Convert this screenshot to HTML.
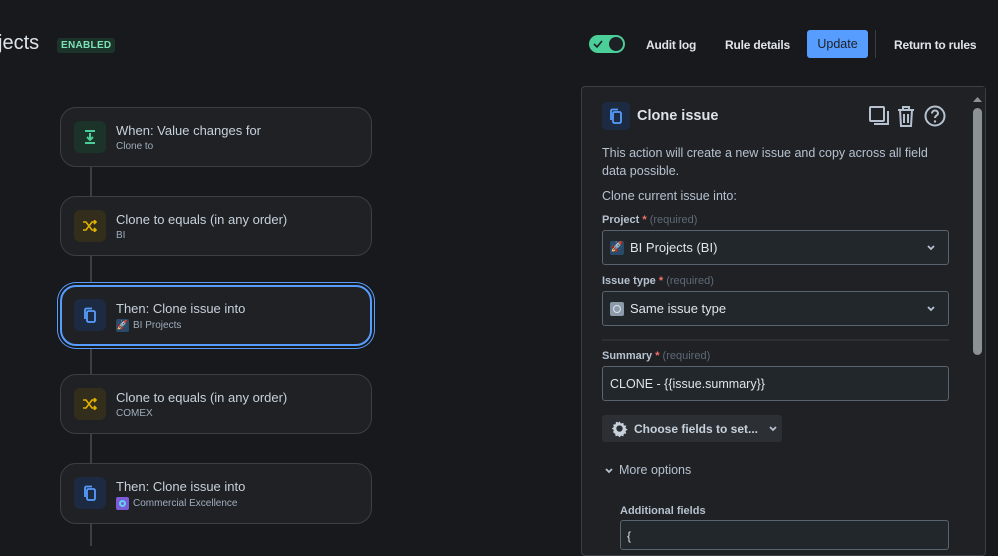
<!DOCTYPE html>
<html><head><style>
*{box-sizing:border-box;margin:0;padding:0}
body{width:998px;height:542px;overflow:hidden;background:#17191c;font-family:"Liberation Sans",sans-serif;color:#c7d1db;position:relative}
.abs{position:absolute}
.title{left:-2px;top:32px;font-size:20px;color:#dee4ea}
.badge{left:57px;top:38px;background:#1c3329;color:#7ee2b8;font-size:10px;font-weight:bold;padding:2px 4px;border-radius:3px;letter-spacing:.3px}
.line{left:90px;top:166px;width:2px;height:380px;background:#3b3f45}
.card{left:60px;width:312px;height:60px;background:#1f2125;border:1px solid #3b3f45;border-radius:16px}
.card.sel{border:2px solid #579dff;box-shadow:0 0 0 2px #17191c,0 0 0 3px #579dff;}
.ic{position:absolute;left:13px;top:13px;width:32px;height:32px;border-radius:6px;display:flex;align-items:center;justify-content:center}
.t1{position:absolute;left:55px;top:15px;font-size:13px;color:#c7d1db}
.t2{position:absolute;left:55px;top:33px;font-size:10px;color:#9fadbc;display:flex;align-items:center;gap:4px}
.nav{top:38px;font-size:12px;color:#dee4ea;font-weight:bold;letter-spacing:-0.2px;white-space:nowrap}
.panel{left:581px;top:86px;width:405px;height:470px;background:#1f2125;border:1px solid #3b3f45;border-radius:4px}
.lbl{font-size:11px;font-weight:bold;color:#b6c2cf}
.lbl .r{color:#f87168}.lbl .q{color:#5e6a77;font-weight:normal}
.sel2{left:602px;width:347px;height:35px;border:1px solid #5a6370;border-radius:3px;background:#22272b;font-size:13px;color:#dee4ea;display:flex;align-items:center;padding-left:7px;gap:6px}
.chev{position:absolute;right:12px;top:13px}
</style></head><body>
<div class="abs title">jects</div>
<div class="abs badge">ENABLED</div>
<div class="abs" style="left:589px;top:35px;width:36px;height:18px;border-radius:9px;background:#4bce97">
 <svg class="abs" style="left:4px;top:4px" width="10" height="10" viewBox="0 0 10 10"><path d="M1 5l3 3 5-6" stroke="#1d2125" stroke-width="1.6" fill="none"/></svg>
 <div class="abs" style="left:20px;top:2px;width:14px;height:14px;border-radius:7px;background:#1d2125"></div></div>
<div class="abs nav" style="left:646px">Audit log</div>
<div class="abs nav" style="left:725px">Rule details</div>
<div class="abs" style="left:807px;top:30px;width:61px;height:28px;background:#579dff;border-radius:3px;color:#1d2125;font-size:12.5px;text-align:center;line-height:28px">Update</div>
<div class="abs" style="left:875px;top:30px;width:1px;height:28px;background:#3b3f45"></div>
<div class="abs nav" style="left:894px">Return to rules</div>

<div class="abs line"></div>
<div class="abs card" style="top:107px"><div class="ic" style="background:#1c3329"><svg width="14" height="16" viewBox="0 0 14 16"><path d="M2 2h10M7 4v7M4 8l3 3 3-3M2 14h10" stroke="#4bce97" stroke-width="2" fill="none"/></svg></div><div class="t1">When: Value changes for</div><div class="t2">Clone to</div></div>
<div class="abs card" style="top:196px"><div class="ic" style="background:#332e1b"><svg width="16" height="12" viewBox="0 0 16 12"><path d="M1 2h3l6 8h4M1 10h3l6-8h4M12 0l2 2-2 2M12 8l2 2-2 2" stroke="#e2b203" stroke-width="1.6" fill="none"/></svg></div><div class="t1">Clone to equals (in any order)</div><div class="t2">BI</div></div>
<div class="abs card sel" style="top:285px;height:61px"><div class="ic" style="background:#1c2b41;left:12px;top:12px"><svg width="14" height="16" viewBox="0 0 14 16"><rect x="4" y="4" width="8" height="11" rx="1.5" stroke="#579dff" stroke-width="1.8" fill="none"/><path d="M2 12V3a1.5 1.5 0 011.5-1.5H9" stroke="#579dff" stroke-width="1.8" fill="none"/></svg></div><div class="t1" style="left:54px;top:14px">Then: Clone issue into</div><div class="t2" style="left:54px;top:32px"><span style="width:13px;height:13px;background:#2a4a6a;border-radius:2px;font-size:9px;line-height:13px;text-align:center">🚀</span>BI Projects</div></div>
<div class="abs card" style="top:374px"><div class="ic" style="background:#332e1b"><svg width="16" height="12" viewBox="0 0 16 12"><path d="M1 2h3l6 8h4M1 10h3l6-8h4M12 0l2 2-2 2M12 8l2 2-2 2" stroke="#e2b203" stroke-width="1.6" fill="none"/></svg></div><div class="t1">Clone to equals (in any order)</div><div class="t2">COMEX</div></div>
<div class="abs card" style="top:463px;height:61px"><div class="ic" style="background:#1c2b41"><svg width="14" height="16" viewBox="0 0 14 16"><rect x="4" y="4" width="8" height="11" rx="1.5" stroke="#579dff" stroke-width="1.8" fill="none"/><path d="M2 12V3a1.5 1.5 0 011.5-1.5H9" stroke="#579dff" stroke-width="1.8" fill="none"/></svg></div><div class="t1">Then: Clone issue into</div><div class="t2"><span style="width:13px;height:13px;background:#7b5cd6;border-radius:2px;display:inline-block;position:relative"><span style="position:absolute;left:3px;top:3px;width:7px;height:7px;border:2px solid #5fd0f0;border-radius:50%"></span></span>Commercial Excellence</div></div>

<div class="abs panel"></div>
<div class="abs" style="left:971px;top:87px;width:14px;height:460px;background:#1f2125"></div>
<div class="abs" style="left:973px;top:108px;width:9px;height:247px;border-radius:5px;background:#8c9196"></div>
<svg class="abs" style="left:973px;top:96px" width="9" height="6"><path d="M0 6L4.5 1 9 6z" fill="#8c9196"/></svg>
<div class="abs" style="left:602px;top:102px;width:28px;height:28px;border-radius:5px;background:#1c2b41;display:flex;align-items:center;justify-content:center"><svg width="14" height="16" viewBox="0 0 14 16"><rect x="4" y="4" width="8" height="11" rx="1.5" stroke="#579dff" stroke-width="1.8" fill="none"/><path d="M2 12V3a1.5 1.5 0 011.5-1.5H9" stroke="#579dff" stroke-width="1.8" fill="none"/></svg></div>
<div class="abs" style="left:637px;top:108px;font-size:14.5px;font-weight:bold;color:#dee4ea">Clone issue</div>
<svg class="abs" style="left:868px;top:104px" width="80" height="24" viewBox="0 0 80 24"><rect x="2" y="3" width="14" height="14" rx="1" stroke="#b6c2cf" stroke-width="2" fill="none"/><path d="M6 20h14V7" stroke="#b6c2cf" stroke-width="2" fill="none"/><path d="M30 6h16M35 6V3h6v3M32 6l1 16h10l1-16M36 10v9M40 10v9" stroke="#b6c2cf" stroke-width="2" fill="none"/><circle cx="67" cy="12" r="9.5" stroke="#b6c2cf" stroke-width="2" fill="none"/><path d="M64 9.5a3 3 0 116 0c0 2-3 2-3 4.5" stroke="#b6c2cf" stroke-width="2" fill="none"/><circle cx="67" cy="17.5" r="1.2" fill="#b6c2cf"/></svg>
<div class="abs" style="left:602px;top:144px;width:350px;font-size:12.5px;line-height:18px;color:#b6c2cf">This action will create a new issue and copy across all field data possible.</div>
<div class="abs" style="left:602px;top:189px;font-size:12.5px;color:#b6c2cf">Clone current issue into:</div>
<div class="abs lbl" style="left:602px;top:214px">Project <span class="r">*</span> <span class="q">(required)</span></div>
<div class="abs sel2" style="top:230px"><span style="width:14px;height:14px;background:#2a4a6a;border-radius:2px;font-size:10px;line-height:14px;text-align:center">🚀</span>BI Projects (BI)<svg class="chev" width="10" height="8"><path d="M2 2l3 3 3-3" stroke="#b6c2cf" stroke-width="1.8" fill="none"/></svg></div>
<div class="abs lbl" style="left:602px;top:275px">Issue type <span class="r">*</span> <span class="q">(required)</span></div>
<div class="abs sel2" style="top:291px"><span style="width:14px;height:14px;background:#8c9bab;border-radius:2px;position:relative"><span style="position:absolute;left:3px;top:3px;width:8px;height:8px;border:1.5px solid #dfe3e8;border-radius:50%"></span></span>Same issue type<svg class="chev" width="10" height="8"><path d="M2 2l3 3 3-3" stroke="#b6c2cf" stroke-width="1.8" fill="none"/></svg></div>
<div class="abs" style="left:602px;top:339px;width:347px;height:2px;background:#2c3035"></div>
<div class="abs lbl" style="left:602px;top:350px">Summary <span class="r">*</span> <span class="q">(required)</span></div>
<div class="abs sel2" style="top:366px;font-size:12.5px">CLONE - {{issue.summary}}</div>
<div class="abs" style="left:602px;top:415px;width:180px;height:27px;background:#2c3035;border-radius:3px;font-size:12px;font-weight:bold;color:#c7d1db;display:flex;align-items:center;padding-left:9px;gap:6px;white-space:nowrap"><svg width="17" height="17" viewBox="0 0 24 24"><path d="M12 2l2 3 3.5-1 .5 3.5 3.5.5-1 3.5 3 2-3 2 1 3.5-3.5.5-.5 3.5-3.5-1-2 3-2-3-3.5 1-.5-3.5L3 17.5l1-3.5-3-2 3-2-1-3.5L6.5 6 7 2.5l3.5 1z" fill="#c7d1db"/><circle cx="12" cy="12" r="4.5" fill="#2c3035"/></svg>Choose fields to set...<svg width="10" height="8" style="margin-left:4px"><path d="M2 2l3 3 3-3" stroke="#b6c2cf" stroke-width="1.8" fill="none"/></svg></div>
<svg class="abs" style="left:604px;top:467px" width="10" height="8"><path d="M2 2l3 3 3-3" stroke="#b6c2cf" stroke-width="1.8" fill="none"/></svg>
<div class="abs" style="left:619px;top:463px;font-size:12.5px;color:#b6c2cf">More options</div>
<div class="abs lbl" style="left:620px;top:505px">Additional fields</div>
<div class="abs" style="left:620px;top:520px;width:329px;height:30px;border:1px solid #5a6370;border-radius:3px;background:#22272b;font-size:12px;padding:8px 6px;color:#dee4ea">{</div>
</body></html>
